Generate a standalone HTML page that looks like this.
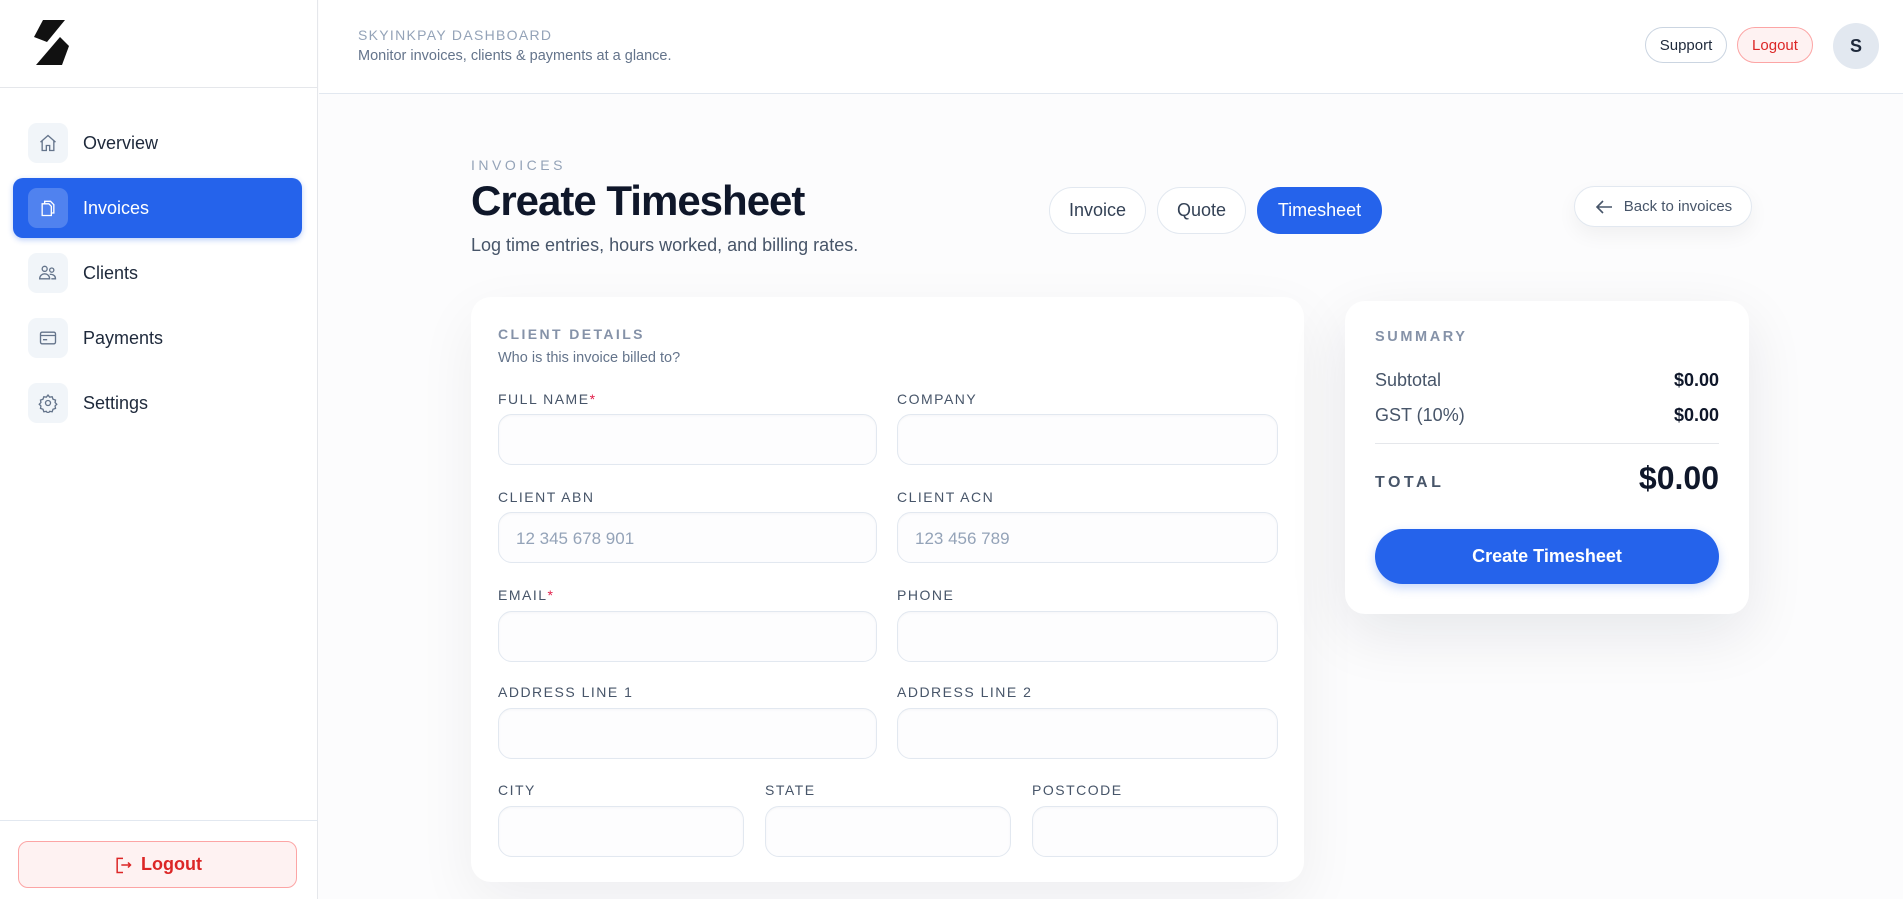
<!DOCTYPE html>
<html><head><meta charset="utf-8"><style>
*{box-sizing:border-box;margin:0;padding:0}
body{width:1903px;height:899px;overflow:hidden;font-family:"Liberation Sans",sans-serif;background:#fcfcfd;position:relative;color:#0f172a}
.a{position:absolute}
.side{left:0;top:0;width:318px;height:899px;background:#fff;border-right:1px solid #e5e7eb}
.nav{left:13px;width:289px;height:60px;border-radius:10px;display:flex;align-items:center;padding-left:15px;font-size:18px;color:#1e293b}
.nav .ic{width:40px;height:40px;border-radius:9px;background:#f1f5f9;display:flex;align-items:center;justify-content:center;margin-right:15px}
.nav.on{background:#2563eb;color:#fff;box-shadow:0 2px 6px rgba(37,99,235,.3)}
.nav.on .ic{background:rgba(255,255,255,.2)}
.lbl{font-size:14px;letter-spacing:1.5px;color:#475569}
.lbl b{color:#e11d48;font-weight:normal}
.in{height:51px;border:1px solid #e2e8f0;border-radius:14px;background:#fdfdfe;box-shadow:inset 0 1px 2px rgba(0,0,0,.03);font-size:17px;color:#94a3b8;padding:16px 0 0 17px}
.pill{border:1px solid #e2e8f0;border-radius:24px;background:#fff;display:flex;align-items:center;justify-content:center;font-size:18px;color:#334155}
</style></head><body>
<div class="a side"></div>
<div class="a" style="left:0;top:87px;width:318px;border-top:1px solid #e5e7eb"></div>
<svg class="a" style="left:20px;top:15px" width="60" height="55" viewBox="0 0 60 55"><path d="M23 5H45L27 27L14 22Z" fill="#111"/><path d="M40 22L49 31L42 50H16Z" fill="#111"/></svg>
<div class="a nav" style="top:113px"><div class="ic"><svg width="20" height="20" viewBox="0 0 24 24" fill="none" stroke="#64748b" stroke-width="1.6"><path d="M3 11l9-8 9 8M5 9.5V21h5v-6h4v6h5V9.5"/></svg></div>Overview</div>
<div class="a nav on" style="top:178px"><div class="ic"><svg width="20" height="20" viewBox="0 0 24 24" fill="none" stroke="#fff" stroke-width="1.6"><path d="M8 7V4h7l4 4v10h-3"/><path d="M5 7h8l3 3v11H5z"/></svg></div>Invoices</div>
<div class="a nav" style="top:243px"><div class="ic"><svg width="20" height="20" viewBox="0 0 24 24" fill="none" stroke="#64748b" stroke-width="1.6"><circle cx="8" cy="7" r="3"/><circle cx="16.5" cy="8.5" r="2.5"/><path d="M2 19c0-4 3-6 6-6s6 2 6 6zM14 13.5c4 0 7 1.5 7 5.5h-5"/></svg></div>Clients</div>
<div class="a nav" style="top:308px"><div class="ic"><svg width="20" height="20" viewBox="0 0 24 24" fill="none" stroke="#64748b" stroke-width="1.6"><rect x="3" y="5" width="18" height="14" rx="2"/><path d="M3 9h18M6 14h5"/></svg></div>Payments</div>
<div class="a nav" style="top:373px"><div class="ic"><svg width="20" height="20" viewBox="0 0 24 24" fill="none" stroke="#64748b" stroke-width="1.6"><circle cx="12" cy="12" r="3"/><path d="M12 2.5l2 2.5 3-.5 1 3 3 1-.5 3 2 2-2 2 .5 3-3 1-1 3-3-.5-2 2.5-2-2.5-3 .5-1-3-3-1 .5-3-2-2 2-2-.5-3 3-1 1-3 3 .5z"/></svg></div>Settings</div>
<div class="a" style="left:0;top:820px;width:318px;border-top:1px solid #e2e8f0"></div>
<div class="a" style="left:18px;top:841px;width:279px;height:47px;border:1px solid #fca5a5;background:#fef2f2;border-radius:10px;display:flex;align-items:center;justify-content:center;color:#dc2626;font-weight:bold;font-size:18px"><svg width="20" height="20" viewBox="0 0 24 24" fill="none" stroke="#dc2626" stroke-width="1.8" style="margin-right:8px"><path d="M12 4H5v17h7M10 12h11M18 9l3 3-3 3"/></svg>Logout</div>

<div class="a" style="left:319px;top:0;width:1584px;height:94px;background:#fff;border-bottom:1px solid #e2e8f0"></div>
<div class="a" style="left:358px;top:27px;font-size:14px;letter-spacing:1.3px;color:#94a3b8">SKYINKPAY DASHBOARD</div>
<div class="a" style="left:358px;top:48px;font-size:14.5px;color:#64748b">Monitor invoices, clients &amp; payments at a glance.</div>
<div class="a pill" style="left:1645px;top:27px;width:82px;height:36px;font-size:15px;color:#1e293b;border-color:#cbd5e1">Support</div>
<div class="a pill" style="left:1737px;top:27px;width:76px;height:36px;font-size:15px;color:#dc2626;background:#fef2f2;border-color:#fca5a5">Logout</div>
<div class="a" style="left:1833px;top:23px;width:46px;height:46px;border-radius:50%;background:#e2e8f0;display:flex;align-items:center;justify-content:center;font-weight:bold;font-size:18px;color:#1e293b">S</div>

<div class="a" style="left:471px;top:157px;font-size:14px;letter-spacing:3.5px;color:#94a3b8">INVOICES</div>
<div class="a" style="left:471px;top:177px;font-size:42px;font-weight:bold;color:#0f172a;letter-spacing:-1px">Create Timesheet</div>
<div class="a" style="left:471px;top:235px;font-size:18px;color:#475569">Log time entries, hours worked, and billing rates.</div>
<div class="a pill" style="left:1049px;top:187px;width:97px;height:47px">Invoice</div>
<div class="a pill" style="left:1157px;top:187px;width:89px;height:47px">Quote</div>
<div class="a pill" style="left:1257px;top:187px;width:125px;height:47px;background:#2563eb;border-color:#2563eb;color:#fff">Timesheet</div>
<div class="a pill" style="left:1574px;top:186px;width:178px;height:41px;font-size:15px;color:#475569;box-shadow:0 8px 20px rgba(0,0,0,.05)"><svg width="20" height="16" viewBox="0 0 20 16" fill="none" stroke="#475569" stroke-width="1.6" style="margin-right:10px"><path d="M18 8H3M9 2L3 8l6 6"/></svg>Back to invoices</div>

<div class="a" style="left:471px;top:297px;width:833px;height:585px;background:#fff;border-radius:20px;box-shadow:0 20px 60px rgba(15,23,42,.06)"></div>
<div class="a" style="left:498px;top:326px;font-size:14px;letter-spacing:2.4px;font-weight:bold;color:#8592a8">CLIENT DETAILS</div>
<div class="a" style="left:498px;top:350px;font-size:14.5px;color:#64748b">Who is this invoice billed to?</div>

<div class="a lbl" style="left:498px;top:391px">FULL NAME<b>*</b></div>
<div class="a lbl" style="left:897px;top:391px">COMPANY</div>
<div class="a in" style="left:498px;top:414px;width:379px"></div>
<div class="a in" style="left:897px;top:414px;width:381px"></div>
<div class="a lbl" style="left:498px;top:489px">CLIENT ABN</div>
<div class="a lbl" style="left:897px;top:489px">CLIENT ACN</div>
<div class="a in" style="left:498px;top:512px;width:379px">12 345 678 901</div>
<div class="a in" style="left:897px;top:512px;width:381px">123 456 789</div>
<div class="a lbl" style="left:498px;top:587px">EMAIL<b>*</b></div>
<div class="a lbl" style="left:897px;top:587px">PHONE</div>
<div class="a in" style="left:498px;top:611px;width:379px"></div>
<div class="a in" style="left:897px;top:611px;width:381px"></div>
<div class="a lbl" style="left:498px;top:684px">ADDRESS LINE 1</div>
<div class="a lbl" style="left:897px;top:684px">ADDRESS LINE 2</div>
<div class="a in" style="left:498px;top:708px;width:379px"></div>
<div class="a in" style="left:897px;top:708px;width:381px"></div>
<div class="a lbl" style="left:498px;top:782px">CITY</div>
<div class="a lbl" style="left:765px;top:782px">STATE</div>
<div class="a lbl" style="left:1032px;top:782px">POSTCODE</div>
<div class="a in" style="left:498px;top:806px;width:246px"></div>
<div class="a in" style="left:765px;top:806px;width:246px"></div>
<div class="a in" style="left:1032px;top:806px;width:246px"></div>

<div class="a" style="left:1345px;top:301px;width:404px;height:313px;background:#fff;border-radius:20px;box-shadow:0 20px 60px rgba(15,23,42,.09)"></div>
<div class="a" style="left:1375px;top:329px;font-size:14.5px;letter-spacing:2.6px;font-weight:bold;color:#8592a8">SUMMARY</div>
<div class="a" style="left:1375px;top:370px;font-size:18px;color:#475569">Subtotal</div>
<div class="a" style="left:1600px;top:370px;width:119px;text-align:right;font-size:18px;font-weight:bold;color:#0f172a">$0.00</div>
<div class="a" style="left:1375px;top:405px;font-size:18px;color:#475569">GST (10%)</div>
<div class="a" style="left:1600px;top:405px;width:119px;text-align:right;font-size:18px;font-weight:bold;color:#0f172a">$0.00</div>
<div class="a" style="left:1375px;top:443px;width:344px;border-top:1px solid #e5e7eb"></div>
<div class="a" style="left:1375px;top:474px;font-size:16px;letter-spacing:3.5px;font-weight:bold;color:#475569">TOTAL</div>
<div class="a" style="left:1560px;top:460px;width:159px;text-align:right;font-size:32px;font-weight:bold;color:#0f172a">$0.00</div>
<div class="a" style="left:1375px;top:529px;width:344px;height:55px;border-radius:28px;background:#2563eb;color:#fff;font-weight:bold;font-size:18px;display:flex;align-items:center;justify-content:center;box-shadow:0 4px 10px rgba(37,99,235,.25)">Create Timesheet</div>
</body></html>
